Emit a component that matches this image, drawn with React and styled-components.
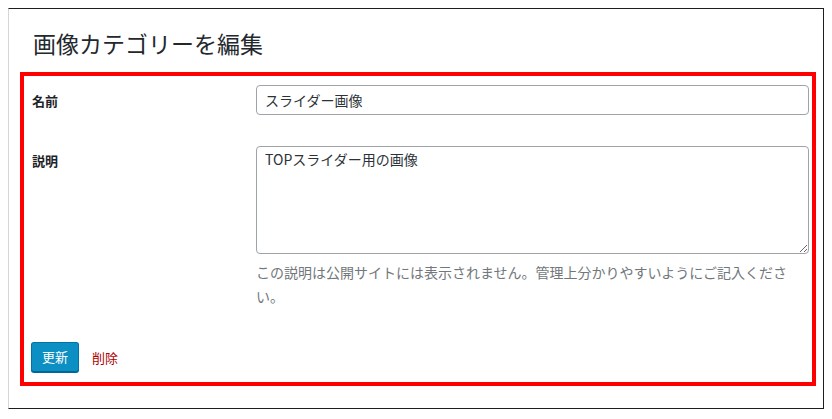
import React from 'react';
import styled, { createGlobalStyle } from 'styled-components';

const Global = createGlobalStyle`
    body {
        margin: 0;
        background: #fff;
        font-family: "Noto Sans CJK JP", "Noto Sans", sans-serif;
        color: #23282d;
    }
`;

// outer window that the screenshot was cut from
const Frame = styled.div`
    box-sizing: border-box;
    width: 816px;
    margin: 8px 0 0 8px;
    padding: 19px 7px 22px 11px;
    border: 1px solid #1e1e1e;
    border-left-color: #d6d6d6;
    background: #fff;
`;

const Title = styled.h1`
    margin: 0 0 14px 13px;
    font-size: 23px;
    font-weight: 400;
    line-height: 30px;
    color: #23282d;
`;

// red annotation box around the form
const Highlight = styled.form`
    box-sizing: border-box;
    width: 796px;
    border: 4px solid #ff0000;
    padding: 9px 3px 10px 8px;
`;

const Fields = styled.div`
    display: grid;
    grid-template-columns: 224px 553px;
    row-gap: 31px;
`;

const Label = styled.label`
    padding-top: ${p => p.offset || 6}px;
    font-size: 13px;
    font-weight: 700;
    line-height: 20px;
    color: #1d2327;
`;

const TextInput = styled.input`
    box-sizing: border-box;
    display: block;
    width: 100%;
    height: 30px;
    margin: 0;
    padding: 0 8px;
    border: 1px solid #9ea3a8;
    border-radius: 4px;
    font-family: inherit;
    font-size: 14px;
    color: #2c3338;
    background: #fff;
`;

const TextArea = styled.textarea`
    box-sizing: border-box;
    display: block;
    width: 100%;
    height: 108px;
    margin: 0;
    padding: 2px 8px;
    border: 1px solid #9ea3a8;
    border-radius: 4px;
    font-family: inherit;
    font-size: 14px;
    line-height: 20px;
    color: #2c3338;
    background: #fff;
`;

const Help = styled.p`
    margin: 6px 0 0;
    font-size: 14px;
    line-height: 24px;
    color: #72777c;
`;

const Actions = styled.div`
    display: flex;
    align-items: center;
    gap: 13px;
    margin-top: 34px;
    padding-left: 0;
    margin-left: -1px;
`;

const Button = styled.button`
    box-sizing: border-box;
    height: 30px;
    padding: 0 10px;
    border: 1px solid #0073aa;
    border-bottom-color: #006799;
    border-radius: 3px;
    background: #0c8fc2;
    box-shadow: 0 1px 0 #006799;
    color: #fff;
    font-family: inherit;
    font-size: 13px;
    line-height: 28px;
`;

const DeleteLink = styled.a`
    font-size: 13px;
    color: #a00;
    text-decoration: none;
`;

const App = () => (
    <>
        <Global />
        <Frame>
            <Title>画像カテゴリーを編集</Title>
            <Highlight onSubmit={e => e.preventDefault()}>
                <Fields>
                    <Label htmlFor="tag-name">名前</Label>
                    <TextInput id="tag-name" defaultValue="スライダー画像" />

                    <Label htmlFor="description" offset={5}>説明</Label>
                    <div>
                        <TextArea id="description" defaultValue="TOPスライダー用の画像" />
                        <Help>この説明は公開サイトには表示されません。管理上分かりやすいようにご記入ください。</Help>
                    </div>
                </Fields>
                <Actions>
                    <Button type="submit">更新</Button>
                    <DeleteLink href="#">削除</DeleteLink>
                </Actions>
            </Highlight>
        </Frame>
    </>
);

export default App;
